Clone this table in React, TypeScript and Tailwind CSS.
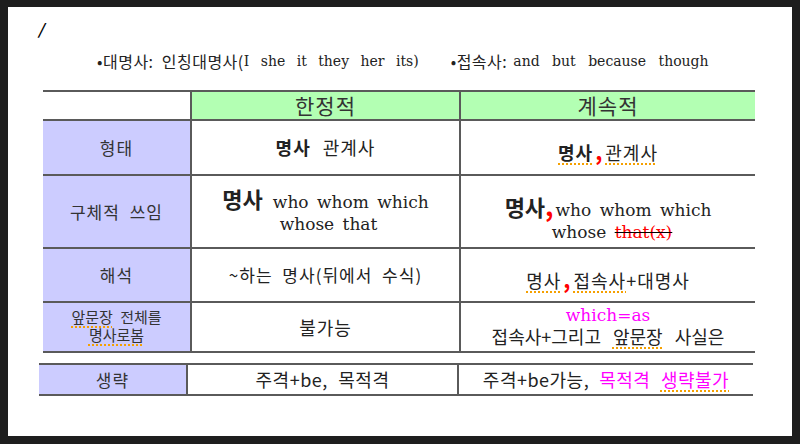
const KR = "font-['Noto_Sans_CJK_KR',sans-serif]";
const SERIF = "font-['DejaVu_Serif','Noto_Sans_CJK_KR',serif]";

const line = 'border-[#5a5a5a]';

function Comma() {
  return <span className="font-bold text-[#ff0000] text-[22px] leading-none mx-[2px]">,</span>;
}

function Squiggle({ children }: { children: React.ReactNode }) {
  return (
    <span className="underline decoration-dotted decoration-[#f5a000] decoration-[1.5px] underline-offset-[3px]">
      {children}
    </span>
  );
}

export default function App() {
  return (
    <div className={`w-[800px] h-[444px] bg-[#1e1e1e] pt-[7px] pl-[8px] ${KR}`}>
      <div className="w-[784px] h-[429px] bg-white relative">
        <div className="pt-[14px] pl-[30px] h-[38px] text-[15px] leading-none text-black font-bold italic">/</div>

        {/* legend line */}
        <div className="mt-[6px] h-[20px] flex items-center text-[16px] text-[#222] pl-[89px] whitespace-pre">
          <span className="tracking-[0.5px]">•대명사:  인칭대명사(</span>
          <span className={`${SERIF} text-[14px] [word-spacing:7px]`}>I she it they her its)</span>
          <span className="ml-[32px] tracking-[0.5px]">•접속사: </span>
          <span className={`${SERIF} text-[14px] ml-[2px] [word-spacing:8px]`}>and but because though</span>
        </div>

        {/* main table */}
        <div className="mt-[19px] ml-[35px] w-[712px]">
          <div className={`grid grid-cols-[147px_269px_296px] border-t-2 ${line}`}>
            {/* header */}
            <div className={`h-[29px] border-b-2 ${line}`} />
            <div className={`h-[29px] border-b-2 border-l-2 ${line} bg-[#b3ffb3] flex items-center justify-center text-[21px] text-[#333] tracking-[1px]`}>한정적</div>
            <div className={`h-[29px] border-b-2 border-l-2 ${line} bg-[#b3ffb3] flex items-center justify-center text-[21px] text-[#333] tracking-[1px]`}>계속적</div>

            {/* 형태 */}
            <div className={`h-[55px] border-b-2 ${line} bg-[#ccccff] flex items-center justify-center text-[17px] text-[#333] tracking-[1px]`}>형태</div>
            <div className={`h-[55px] border-b-2 border-l-2 ${line} flex items-center justify-center text-[18px] text-[#222] tracking-[1px]`}>
              <span className="font-bold">명사</span>
              <span className="ml-[12px]">관계사</span>
            </div>
            <div className={`h-[55px] border-b-2 border-l-2 ${line} flex items-end justify-center pb-[8px] text-[18px] text-[#222] tracking-[1px]`}>
              <Squiggle>
                <span className="font-bold">명사</span>
                <Comma />
                관계사
              </Squiggle>
            </div>

            {/* 구체적 쓰임 */}
            <div className={`h-[73px] border-b-2 ${line} bg-[#ccccff] flex items-center justify-center text-[17px] text-[#333] tracking-[1px] [word-spacing:5px]`}>구체적 쓰임</div>
            <div className={`h-[73px] border-b-2 border-l-2 ${line} flex flex-col items-center justify-center text-[#222] leading-[22px] pb-[2px]`}>
              <div className="flex items-baseline">
                <span className="font-bold text-[22px]">명사</span>
                <span className={`${SERIF} text-[17px] ml-[10px] [word-spacing:3px]`}>who whom which</span>
              </div>
              <div className={`${SERIF} text-[17px] ml-[6px] [word-spacing:3px]`}>whose that</div>
            </div>
            <div className={`h-[73px] border-b-2 border-l-2 ${line} flex flex-col items-center justify-end text-[#222] leading-[22px] pb-[4px]`}>
              <div className="flex items-baseline">
                <span className="font-bold text-[22px]">명사</span>
                <span className="font-bold text-[#ff0000] text-[26px] leading-none mr-[2px]">,</span>
                <span className={`${SERIF} text-[17px] [word-spacing:3px]`}>who whom which</span>
              </div>
              <div className={`${SERIF} text-[17px] ml-[8px] [word-spacing:3px]`}>
                whose <span className="text-[#ff0000] line-through decoration-black">that(x)</span>
              </div>
            </div>

            {/* 해석 */}
            <div className={`h-[54px] border-b-2 ${line} bg-[#ccccff] flex items-center justify-center text-[17px] text-[#333] tracking-[1px]`}>해석</div>
            <div className={`h-[54px] border-b-2 border-l-2 ${line} flex items-center justify-center text-[17px] text-[#222] tracking-[1px] [word-spacing:5px]`}>~하는 명사(뒤에서 수식)</div>
            <div className={`h-[54px] border-b-2 border-l-2 ${line} flex items-end justify-center pb-[7px] text-[18px] text-[#222] tracking-[1px]`}>
              <Squiggle>
                명사
                <Comma />
                접속사
              </Squiggle>
              +대명사
            </div>

            {/* 앞문장 */}
            <div className={`h-[50px] border-b-2 ${line} bg-[#ccccff] flex flex-col items-center justify-center text-[15px] leading-[18px] text-[#333] pb-[2px]`}>
              <div className="[word-spacing:4px]"><Squiggle>앞문장</Squiggle> 전체를</div>
              <div><Squiggle>명사로봄</Squiggle></div>
            </div>
            <div className={`h-[50px] border-b-2 border-l-2 ${line} flex items-center justify-center text-[18px] text-[#222] tracking-[1px]`}>불가능</div>
            <div className={`h-[50px] border-b-2 border-l-2 ${line} flex flex-col items-center justify-center text-[#222] leading-[21px] pb-[2px]`}>
              <div className={`${SERIF} text-[17px] text-[#ff00ff]`}>which=as</div>
              <div className="text-[18px] [word-spacing:8px]">
                접속사+그리고 <Squiggle>앞문장</Squiggle> 사실은
              </div>
            </div>
          </div>
        </div>

        {/* 생략 table */}
        <div className={`mt-[10px] ml-[31px] w-[714px] grid grid-cols-[147px_271px_296px] border-t-2 border-b-2 ${line}`}>
          <div className="h-[29px] bg-[#ccccff] flex items-center justify-center text-[17px] text-[#333] tracking-[1px]">생략</div>
          <div className={`h-[29px] border-l-2 ${line} flex items-center justify-center text-[18px] text-[#222] tracking-[0.5px] [word-spacing:6px]`}>주격+be, 목적격</div>
          <div className={`h-[29px] border-l-2 ${line} flex items-center justify-center text-[18px] text-[#222] tracking-[0.5px] [word-spacing:6px]`}>
            <span>주격+be가능,</span>
            <span className="ml-[10px] text-[#ff00ff]">
              목적격 <Squiggle>생략불가</Squiggle>
            </span>
          </div>
        </div>
      </div>
    </div>
  );
}
